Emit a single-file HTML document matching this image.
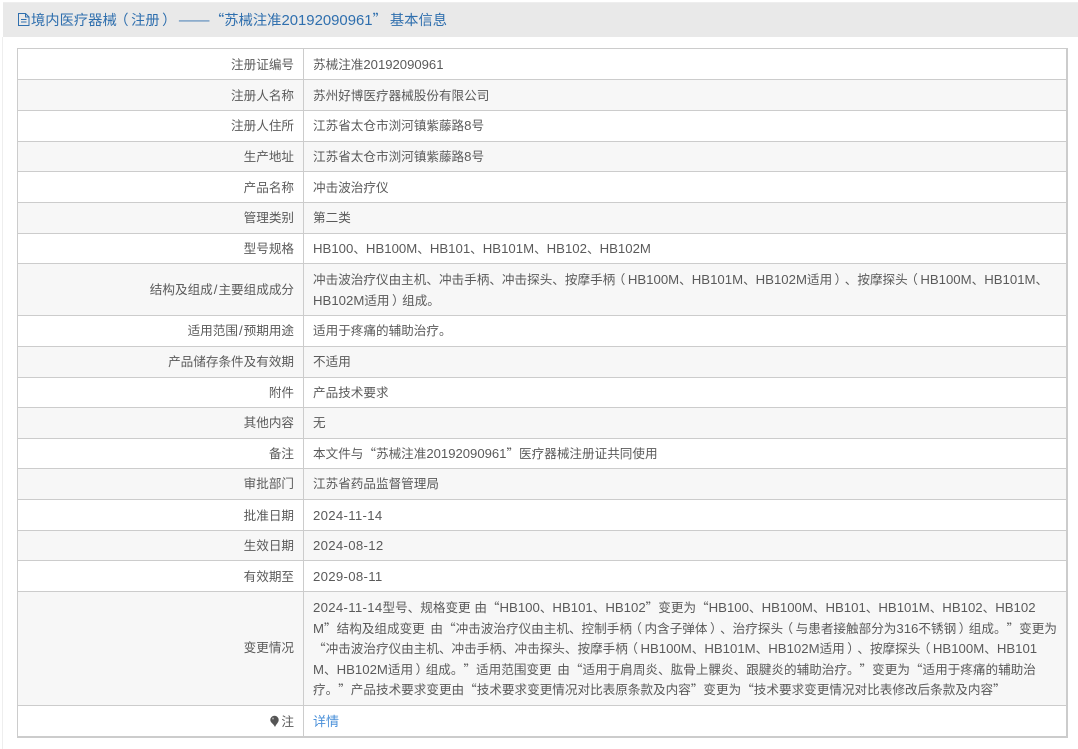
<!DOCTYPE html>
<html><head><meta charset="utf-8">
<style>
html,body{margin:0;padding:0;background:#fff;width:1078px;height:749px;overflow:hidden}
body{font:12.6px/20px "Noto Sans CJK SC",sans-serif;color:#5a5a5a;position:relative;text-spacing-trim:space-all}
b{font-weight:normal;font-family:"Liberation Sans",sans-serif;font-size:13.2px;line-height:1}
b.d{letter-spacing:.3px}
b.n{font-size:13.1px}
b.s{padding:0 1px}
b.z{padding:0 1px}
i{font-style:normal;position:relative}
i.l{left:-2.5px}
i.p{left:2.5px}
#hd{position:absolute;left:3px;top:2px;width:1075px;height:35px;background:#e9e9e9;border-top:1px solid #eee;box-sizing:border-box}
#tt{position:absolute;left:31px;top:10px;color:#2f6fae;line-height:20px;white-space:pre;font-size:14.3px}
#tt b{font-size:14.9px}
#dd{display:inline-block;width:32px;margin-left:4px;transform:scaleX(1.35);transform-origin:0 50%}
#ic{position:absolute;left:18px;top:13px}
#lb{position:absolute;left:2px;top:37px;width:1px;height:712px;background:#eee}
.r{position:absolute;left:17px;width:1051px;box-sizing:border-box;border:1px solid #ccc;border-width:1px 2px 0 1px}
.r.a{background:#f7f7f7}
.k{position:absolute;right:772px;text-align:right;white-space:nowrap}
.c{position:absolute;left:285px;top:0;bottom:0;width:1px;background:#ccc}
.v{position:absolute;left:295px;white-space:nowrap}
</style></head><body>
<div id="hd"></div><div id="lb"></div>
<svg id="ic" width="12" height="13" viewBox="0 0 12 13" fill="none" stroke="#2f6fae" stroke-width="1"><path d="M.5.500h7l3.500 3.500v8.500H.5zM7.500.5v3.500H11M3 6.500h5.500M3 9h5.500"/></svg>
<div id="tt">境内医疗器械<i class="l">（</i>注册<i class="p">）</i><span id="dd">——</span>“苏械注准<b>20192090961</b>”<span style="margin-left:3px">基本信息</span></div>

<div class="r" style="top:48px;height:31px"><div class="k" style="top:5px">注册证编号</div><div class="c"></div><div class="v" style="top:5px">苏械注准<b class="n">20192090961</b></div></div>
<div class="r a" style="top:79px;height:31px"><div class="k" style="top:5px">注册人名称</div><div class="c"></div><div class="v" style="top:5px">苏州好博医疗器械股份有限公司</div></div>
<div class="r" style="top:110px;height:31px"><div class="k" style="top:4px">注册人住所</div><div class="c"></div><div class="v" style="top:4px">江苏省太仓市浏河镇紫藤路<b>8</b>号</div></div>
<div class="r a" style="top:141px;height:30px"><div class="k" style="top:4px">生产地址</div><div class="c"></div><div class="v" style="top:4px">江苏省太仓市浏河镇紫藤路<b>8</b>号</div></div>
<div class="r" style="top:171px;height:31px"><div class="k" style="top:5px">产品名称</div><div class="c"></div><div class="v" style="top:5px">冲击波治疗仪</div></div>
<div class="r a" style="top:202px;height:31px"><div class="k" style="top:4px">管理类别</div><div class="c"></div><div class="v" style="top:4px">第二类</div></div>
<div class="r" style="top:233px;height:30px"><div class="k" style="top:4px">型号规格</div><div class="c"></div><div class="v" style="top:4px"><b>HB100</b>、<b>HB100M</b>、<b>HB101</b>、<b>HB101M</b>、<b>HB102</b>、<b>HB102M</b></div></div>
<div class="r a" style="top:263px;height:52px"><div class="k" style="top:15px">结构及组成<b class="z">/</b>主要组成成分</div><div class="c"></div><div class="v" style="top:5px;line-height:20.5px">冲击波治疗仪由主机、冲击手柄、冲击探头、按摩手柄<i class="l">（</i><b>HB100M</b>、<b>HB101M</b>、<b>HB102M</b>适用<i class="p">）</i>、按摩探头<i class="l">（</i><b>HB100M</b>、<b>HB101M</b>、<br><b>HB102M</b>适用<i class="p">）</i>组成。</div></div>
<div class="r" style="top:315px;height:31px"><div class="k" style="top:4px">适用范围<b class="z">/</b>预期用途</div><div class="c"></div><div class="v" style="top:4px">适用于疼痛的辅助治疗。</div></div>
<div class="r a" style="top:346px;height:31px"><div class="k" style="top:4px">产品储存条件及有效期</div><div class="c"></div><div class="v" style="top:4px">不适用</div></div>
<div class="r" style="top:377px;height:30px"><div class="k" style="top:4px">附件</div><div class="c"></div><div class="v" style="top:4px">产品技术要求</div></div>
<div class="r a" style="top:407px;height:31px"><div class="k" style="top:4px">其他内容</div><div class="c"></div><div class="v" style="top:4px">无</div></div>
<div class="r" style="top:438px;height:30px"><div class="k" style="top:4px">备注</div><div class="c"></div><div class="v" style="top:4px">本文件与“苏械注准<b class="n">20192090961</b>”医疗器械注册证共同使用</div></div>
<div class="r a" style="top:468px;height:31px"><div class="k" style="top:4px">审批部门</div><div class="c"></div><div class="v" style="top:4px">江苏省药品监督管理局</div></div>
<div class="r" style="top:499px;height:31px"><div class="k" style="top:5px">批准日期</div><div class="c"></div><div class="v" style="top:5px"><b class="d">2024-11-14</b></div></div>
<div class="r a" style="top:530px;height:30px"><div class="k" style="top:4px">生效日期</div><div class="c"></div><div class="v" style="top:4px"><b class="d">2024-08-12</b></div></div>
<div class="r" style="top:560px;height:31px"><div class="k" style="top:5px">有效期至</div><div class="c"></div><div class="v" style="top:5px"><b class="d">2029-08-11</b></div></div>
<div class="r a" style="top:591px;height:114px"><div class="k" style="top:45px">变更情况</div><div class="c"></div><div class="v" style="top:5px;line-height:20.6px"><b class="d">2024-11-14</b>型号、规格变更<b> </b>由“<b>HB100</b>、<b>HB101</b>、<b>HB102</b>”变更为“<b>HB100</b>、<b>HB100M</b>、<b>HB101</b>、<b>HB101M</b>、<b>HB102</b>、<b>HB102</b><br><b>M</b>”结构及组成变更<b class="s"> </b>由“冲击波治疗仪由主机、控制手柄<i class="l">（</i>内含子弹体<i class="p">）</i>、治疗探头<i class="l">（</i>与患者接触部分为<b>316</b>不锈钢<i class="p">）</i>组成。”变更为<br>“冲击波治疗仪由主机、冲击手柄、冲击探头、按摩手柄<i class="l">（</i><b>HB100M</b>、<b>HB101M</b>、<b>HB102M</b>适用<i class="p">）</i>、按摩探头<i class="l">（</i><b>HB100M</b>、<b>HB101</b><br><b>M</b>、<b>HB102M</b>适用<i class="p">）</i>组成。”适用范围变更<b class="s"> </b>由“适用于肩周炎、肱骨上髁炎、跟腱炎的辅助治疗。”变更为“适用于疼痛的辅助治<br>疗。”产品技术要求变更由“技术要求变更情况对比表原条款及内容”变更为“技术要求变更情况对比表修改后条款及内容”</div></div>
<div class="r" style="top:705px;height:33px;border-bottom:2px solid #ccc"><div class="k" style="top:5px"><svg width="10" height="13" viewBox="0 0 10 13" style="vertical-align:-2px;margin-right:1px"><path d="M4.500.800a4.200 4.200 0 0 1 4.200 4.200c0 2.500-2.500 4-3.700 7-1.200-3-4.700-4.300-4.700-7A4.200 4.200 0 0 1 4.500.800z" fill="#555"/><circle cx="3" cy="3.500" r="1" fill="#aaa"/></svg>注</div><div class="c"></div><div class="v" style="top:5px;color:#4a90d9;font-size:13px">详情</div></div>
</body></html>
